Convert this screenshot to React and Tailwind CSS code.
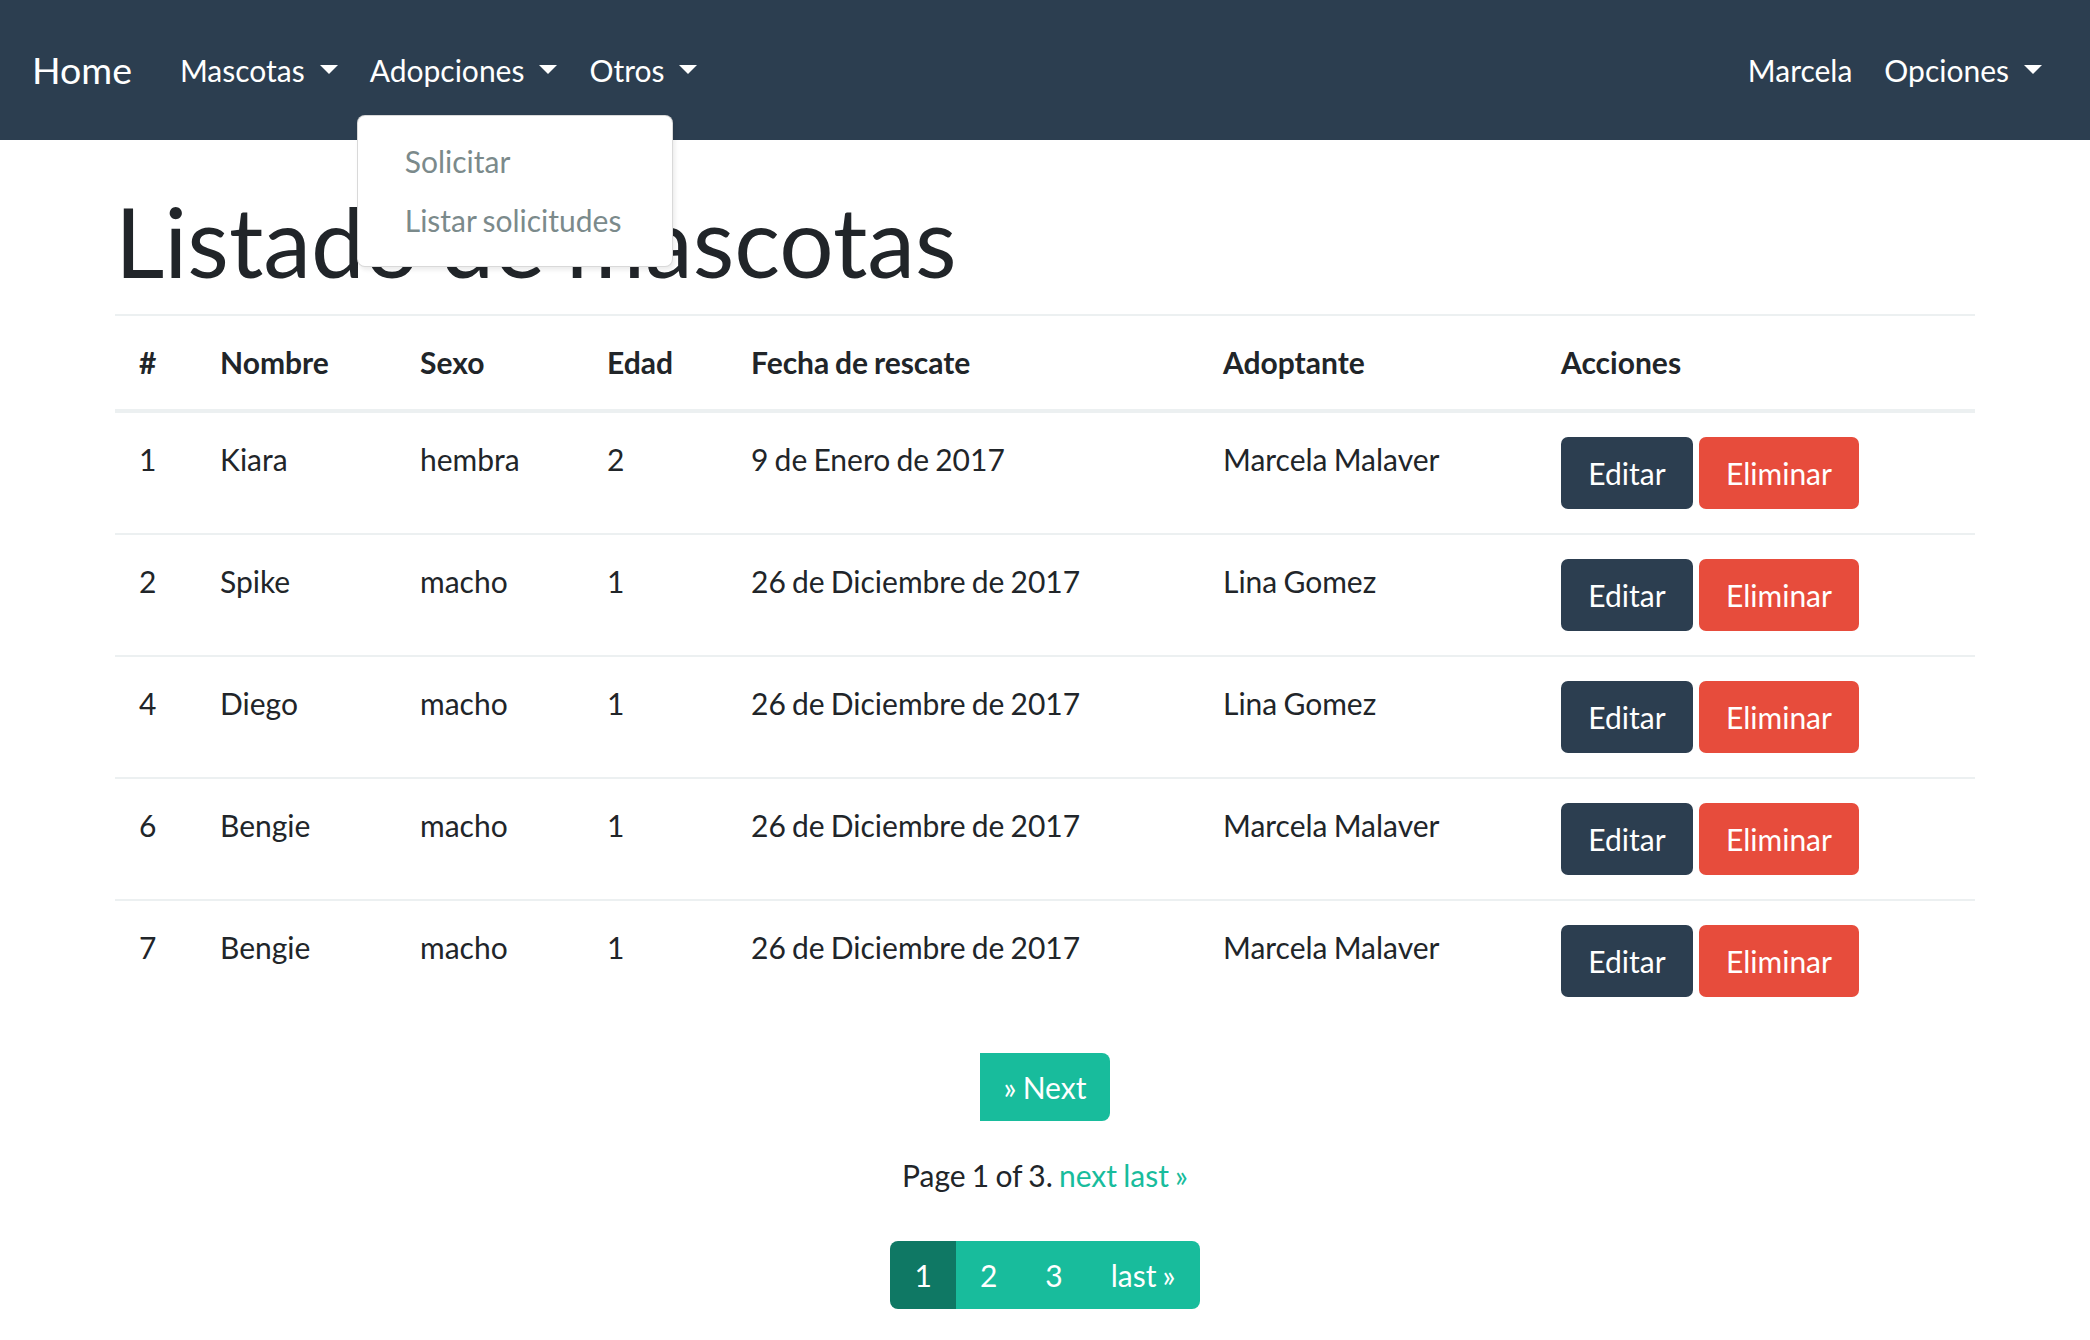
const rows = [
  { id: 1, nombre: "Kiara", sexo: "hembra", edad: 2, fecha: "9 de Enero de 2017", adoptante: "Marcela Malaver" },
  { id: 2, nombre: "Spike", sexo: "macho", edad: 1, fecha: "26 de Diciembre de 2017", adoptante: "Lina Gomez" },
  { id: 4, nombre: "Diego", sexo: "macho", edad: 1, fecha: "26 de Diciembre de 2017", adoptante: "Lina Gomez" },
  { id: 6, nombre: "Bengie", sexo: "macho", edad: 1, fecha: "26 de Diciembre de 2017", adoptante: "Marcela Malaver" },
  { id: 7, nombre: "Bengie", sexo: "macho", edad: 1, fecha: "26 de Diciembre de 2017", adoptante: "Marcela Malaver" },
];

function Caret() {
  return (
    <span className="inline-block ml-[15px] w-0 h-0 border-t-[9px] border-x-[9px] border-t-white border-x-transparent align-[0.255em]" />
  );
}

function NavLink({ children, caret }) {
  return (
    <a href="#" className="block px-[16px] py-[8px] text-[30px] leading-[45px] text-white">
      {children}
      {caret && <Caret />}
    </a>
  );
}

export default function App() {
  return (
    <div
      className="min-h-screen bg-white text-[#212529] text-[30px] [word-spacing:-0.05em]"
      style={{ fontFamily: "Lato, 'Noto Sans', sans-serif" }}
    >
      <nav className="h-[140px] bg-[#2c3e50] flex items-center px-[32px]">
        <a href="#" className="text-[37.5px] leading-[56px] text-white mr-[32px]">Home</a>
        <ul className="flex items-center">
          <li><NavLink caret>Mascotas</NavLink></li>
          <li className="relative">
            <NavLink caret>Adopciones</NavLink>
            <div className="absolute left-[3px] top-full mt-[14px] w-[316px] z-10 bg-white border border-black/15 rounded-[8px] py-[16px] shadow-[2px_3px_4px_rgba(0,0,0,0.08)]">
              <a href="#" className="block px-[47px] py-[7px] text-[30px] leading-[45px] text-[#7b8a8b] whitespace-nowrap">Solicitar</a>
              <a href="#" className="block px-[47px] py-[7px] text-[30px] leading-[45px] text-[#7b8a8b] whitespace-nowrap">Listar solicitudes</a>
            </div>
          </li>
          <li><NavLink caret>Otros</NavLink></li>
        </ul>
        <ul className="flex items-center ml-auto">
          <li><NavLink>Marcela</NavLink></li>
          <li><NavLink caret>Opciones</NavLink></li>
        </ul>
      </nav>

      <main className="px-[115px] pt-[43px]">
        <h1 className="text-[96px] leading-[1.2] font-normal mb-[16px] [word-spacing:-0.035em]">Listado de mascotas</h1>

        <table className="w-full table-fixed border-collapse text-[30px] leading-[45px]">
          <colgroup>
            <col className="w-[81px]" />
            <col className="w-[200px]" />
            <col className="w-[187px]" />
            <col className="w-[144px]" />
            <col className="w-[472px]" />
            <col className="w-[338px]" />
            <col className="w-[438px]" />
          </colgroup>
          <thead>
            <tr>
              {["#", "Nombre", "Sexo", "Edad", "Fecha de rescate", "Adoptante", "Acciones"].map((h) => (
                <th key={h} className="text-left font-bold p-[24px] align-bottom border-t-2 border-b-4 border-[#ecf0f1]">
                  {h}
                </th>
              ))}
            </tr>
          </thead>
          <tbody>
            {rows.map((r, i) => {
              const cell = "p-[24px] align-top border-[#ecf0f1] " + (i > 0 ? "border-t-2" : "");
              return (
                <tr key={i}>
                  <td className={cell}>{r.id}</td>
                  <td className={cell}>{r.nombre}</td>
                  <td className={cell}>{r.sexo}</td>
                  <td className={cell}>{r.edad}</td>
                  <td className={cell}>{r.fecha}</td>
                  <td className={cell}>{r.adoptante}</td>
                  <td className={cell}>
                    <div className="flex gap-[6px]">
                      <a href="#" className="w-[132px] h-[72px] flex items-center justify-center rounded-[7px] bg-[#2c3e50] text-white">Editar</a>
                      <a href="#" className="w-[160px] h-[72px] flex items-center justify-center rounded-[7px] bg-[#e74c3c] text-white">Eliminar</a>
                    </div>
                  </td>
                </tr>
              );
            })}
          </tbody>
        </table>

        <div className="mt-[32px] flex justify-center">
          <a href="#" className="h-[68px] px-[24px] flex items-center bg-[#18bc9c] text-white text-[30px] rounded-r-[8px]">» Next</a>
        </div>

        <p className="mt-[32px] text-center text-[30px] leading-[45px]">
          Page 1 of 3. <a href="#" className="text-[#18bc9c]">next</a> <a href="#" className="text-[#18bc9c]">last »</a>
        </p>

        <div className="mt-[43px] flex justify-center">
          <ul className="flex h-[68px] rounded-[8px] overflow-hidden text-[30px] text-white">
            <li className="px-[24px] flex items-center bg-[#0f7864]">1</li>
            <li className="px-[24px] flex items-center bg-[#18bc9c]">2</li>
            <li className="px-[24px] flex items-center bg-[#18bc9c]">3</li>
            <li className="px-[24px] flex items-center bg-[#18bc9c]">last »</li>
          </ul>
        </div>
      </main>
    </div>
  );
}
